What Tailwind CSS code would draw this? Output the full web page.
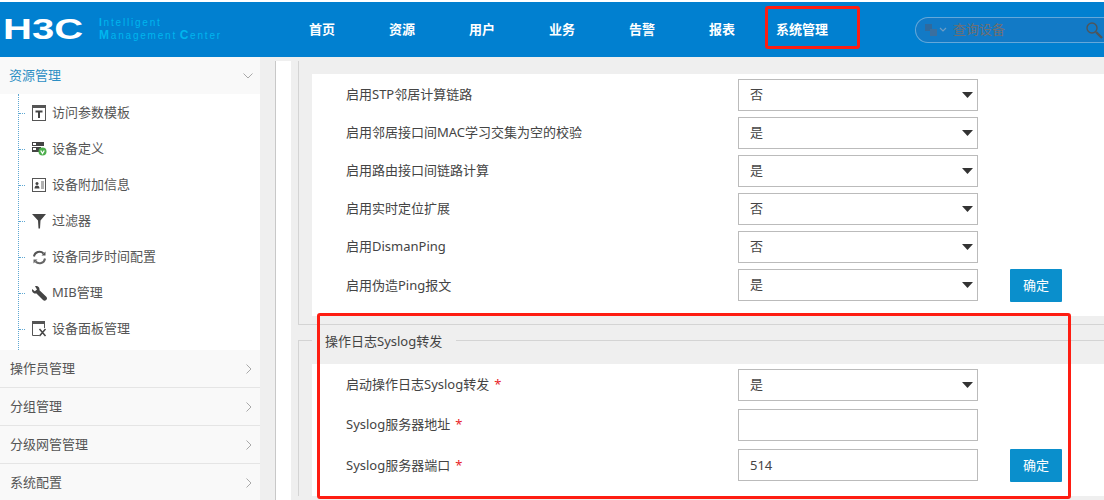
<!DOCTYPE html>
<html lang="zh">
<head>
<meta charset="utf-8">
<title>H3C Intelligent Management Center</title>
<script src="https://cdn.jsdelivr.net/npm/@tailwindcss/browser@4"></script>
</head>
<body class="m-0 bg-white">
<div class="relative flex h-[500px] w-[1104px] flex-col overflow-hidden bg-white pt-[2px] font-['Noto_Sans','Noto_Sans_CJK_SC',sans-serif] text-[13px] text-[#555]">

  <!-- header -->
  <header class="flex h-[55px] shrink-0 items-center bg-[#0180d0]">
    <div class="flex w-[282px] shrink-0 items-center pl-[3px]">
      <div class="w-[96px] shrink-0 overflow-visible">
        <span class="inline-block origin-left scale-x-[1.38] font-['Liberation_Sans',sans-serif] text-[29px] leading-none font-bold text-white">H3C</span>
      </div>
      <div class="font-['Liberation_Sans',sans-serif] text-[10px] leading-[12px] tracking-[1.8px] whitespace-nowrap text-[#00b6ee]">
        <div><b>I</b>ntelligent</div>
        <div class="[word-spacing:-2px]"><b class="text-[12px]">M</b>anagement <b class="text-[12px]">C</b>enter</div>
      </div>
    </div>
    <nav class="flex font-bold text-white">
      <a class="w-[80px] text-center">首页</a>
      <a class="w-[80px] text-center">资源</a>
      <a class="w-[80px] text-center">用户</a>
      <a class="w-[80px] text-center">业务</a>
      <a class="w-[80px] text-center">告警</a>
      <a class="w-[80px] text-center">报表</a>
      <a class="w-[80px] text-center whitespace-nowrap">系统管理</a>
    </nav>
    <div class="ml-[73px] flex h-[26px] w-[200px] shrink-0 items-center rounded-l-full border border-white/35 bg-[#127ac6] pl-[9px]">
      <svg width="12" height="12" viewBox="0 0 12 12" class="shrink-0"><rect x="0" y="0" width="7" height="7" fill="#2f6a9e"/><rect x="5" y="5" width="7" height="7" fill="#3a6f9f"/></svg>
      <svg width="8" height="6" viewBox="0 0 8 6" class="ml-[2px] shrink-0"><path d="M1 1l3 3 3-3" fill="none" stroke="#6d9cc4" stroke-width="1.2"/></svg>
      <input class="ml-[6px] w-[130px] bg-transparent text-[13px] outline-none placeholder:text-[#6f6f72]" placeholder="查询设备">
      <svg width="18" height="18" viewBox="0 0 18 18" class="ml-[2px] shrink-0"><circle cx="7" cy="7" r="5" fill="none" stroke="#505559" stroke-width="1.4"/><path d="M11 11l6 6" stroke="#505559" stroke-width="2.4"/></svg>
    </div>
  </header>

  <div class="flex min-h-0 flex-1">
    <!-- sidebar -->
    <aside class="w-[260px] shrink-0 bg-white">
      <div class="flex h-[37px] items-center justify-between bg-[#f9f9f9] pr-[7px] pl-[9px] text-[#2d8fc4]">
        <span>资源管理</span>
        <svg width="10" height="6" viewBox="0 0 10 6"><path d="M.5.5L5 5 9.500.5" fill="none" stroke="#a9a9a9" stroke-width="1"/></svg>
      </div>
      <ul class="ml-[18px] border-l border-dotted border-[#5fa8d3] pt-px pb-[3px]">
        <li class="flex h-[36px] items-center"><i class="mr-[7px] w-[6px] border-t border-dotted border-[#5fa8d3]"></i>
          <svg width="15" height="16" viewBox="0 0 15 16" class="mr-[5px] shrink-0"><rect x=".5" y=".5" width="13" height="15" fill="none" stroke="#555"/><rect x="0" y="0" width="14" height="3" fill="#555"/><path d="M3.500 5.500h7v2H8V13H6V7.500H3.500z" fill="#444"/></svg>
          <span>访问参数模板</span></li>
        <li class="flex h-[36px] items-center"><i class="mr-[7px] w-[6px] border-t border-dotted border-[#5fa8d3]"></i>
          <svg width="15" height="14" viewBox="0 0 15 14" class="mr-[5px] shrink-0"><rect x="0" y="0" width="12" height="4" fill="#444"/><rect x="0" y="5" width="9" height="5" fill="#444"/><rect x="1" y="1" width="3" height="2" fill="#fff"/><rect x="1" y="6" width="3" height="2" fill="#fff"/><circle cx="10.500" cy="9.500" r="4" fill="#4cae4c"/><path d="M8.700 8.500l1.800 3 1.800-3" fill="none" stroke="#fff" stroke-width="1.300"/></svg>
          <span>设备定义</span></li>
        <li class="flex h-[36px] items-center"><i class="mr-[7px] w-[6px] border-t border-dotted border-[#5fa8d3]"></i>
          <svg width="15" height="14" viewBox="0 0 15 14" class="mr-[5px] shrink-0"><rect x=".5" y=".5" width="13" height="13" fill="none" stroke="#555"/><circle cx="5" cy="5.500" r="1.500" fill="#444"/><path d="M2.500 10.500c0-2 1-3 2.500-3s2.500 1 2.500 3z" fill="#444"/><path d="M9 4h3M9 6h3M9 8h3M9 10h3" stroke="#666"/></svg>
          <span>设备附加信息</span></li>
        <li class="flex h-[36px] items-center"><i class="mr-[7px] w-[6px] border-t border-dotted border-[#5fa8d3]"></i>
          <svg width="15" height="16" viewBox="0 0 15 16" class="mr-[5px] shrink-0"><path d="M0 1h14L8.500 7.500 8 15.500H6.500L6 7.500z" fill="#444"/></svg>
          <span>过滤器</span></li>
        <li class="flex h-[36px] items-center"><i class="mr-[7px] w-[6px] border-t border-dotted border-[#5fa8d3]"></i>
          <svg width="15" height="15" viewBox="0 0 15 15" class="mr-[5px] shrink-0"><path d="M2 6.500A5.500 5.500 0 0 1 11.500 3.500" fill="none" stroke="#555" stroke-width="2"/><path d="M13 8.500A5.500 5.500 0 0 1 3.500 11.500" fill="none" stroke="#666" stroke-width="2"/><path d="M9.500 5.500h4v-4z" fill="#555"/><path d="M5.500 9.500h-4v4z" fill="#666"/></svg>
          <span>设备同步时间配置</span></li>
        <li class="flex h-[36px] items-center"><i class="mr-[7px] w-[6px] border-t border-dotted border-[#5fa8d3]"></i>
          <svg width="15" height="15" viewBox="0 0 15 15" class="mr-[5px] shrink-0"><path d="M0 3L2.800 5.200 5 3.500 3 .3C5.500-.7 7.800 1 7.500 4.200L14.300 10.800C15.300 11.900 15.200 13 14.200 14 13.200 15 12 15 11 14L4.500 7.400C1.800 8 -.6 5.700 0 3z" fill="#444"/></svg>
          <span>MIB管理</span></li>
        <li class="flex h-[36px] items-center"><i class="mr-[7px] w-[6px] border-t border-dotted border-[#5fa8d3]"></i>
          <svg width="15" height="16" viewBox="0 0 15 16" class="mr-[5px] shrink-0"><path d="M7 14.500H.5V.5h12V7" fill="none" stroke="#555"/><rect x="0" y="0" width="13" height="3" fill="#555"/><path d="M7.500 8l6 7M13.500 8l-6 7" stroke="#444" stroke-width="1.500"/></svg>
          <span>设备面板管理</span></li>
      </ul>
      <div class="flex h-[38px] items-center justify-between border-b border-[#e5e5e5] bg-[#f9f9f9] pr-[8px] pl-[10px]"><span>操作员管理</span><svg width="6" height="10" viewBox="0 0 6 10"><path d="M.5.500L5 5 .5 9.500" fill="none" stroke="#a9a9a9"/></svg></div>
      <div class="flex h-[38px] items-center justify-between border-b border-[#e5e5e5] bg-[#f9f9f9] pr-[8px] pl-[10px]"><span>分组管理</span><svg width="6" height="10" viewBox="0 0 6 10"><path d="M.5.500L5 5 .5 9.500" fill="none" stroke="#a9a9a9"/></svg></div>
      <div class="flex h-[38px] items-center justify-between border-b border-[#e5e5e5] bg-[#f9f9f9] pr-[8px] pl-[10px]"><span>分级网管管理</span><svg width="6" height="10" viewBox="0 0 6 10"><path d="M.5.500L5 5 .5 9.500" fill="none" stroke="#a9a9a9"/></svg></div>
      <div class="flex h-[38px] items-center justify-between border-b border-[#e5e5e5] bg-[#f9f9f9] pr-[8px] pl-[10px]"><span>系统配置</span><svg width="6" height="10" viewBox="0 0 6 10"><path d="M.5.500L5 5 .5 9.500" fill="none" stroke="#a9a9a9"/></svg></div>
    </aside>

    <!-- main -->
    <main class="flex min-w-0 flex-1 bg-[#efefef] pt-[4px] pl-[15px]">
      <div class="w-[16px] shrink-0 border-l border-[#c8c8c8] bg-white"></div>
      <div class="min-w-0 flex-1 pl-[7px]">

        <section class="h-[264px] border-b border-l border-[#d4d4d4] pt-[13px] pl-[13px]">
          <div class="flex h-[242px] flex-col gap-[6px] bg-white pt-[5px] pl-[34px] text-[#444]">
            <div class="flex h-[32px] items-center"><label class="w-[392px] shrink-0">启用STP邻居计算链路</label>
              <div class="relative w-[240px]"><select class="h-[32px] w-full appearance-none border border-[#bbb] bg-white pl-[11px] text-[13px] text-[#444]"><option>否</option></select><svg width="11" height="6" viewBox="0 0 11 6" class="pointer-events-none absolute top-[13px] right-[5px]"><path d="M0 0h11L5.500 6z" fill="#333"/></svg></div></div>
            <div class="flex h-[32px] items-center"><label class="w-[392px] shrink-0">启用邻居接口间MAC学习交集为空的校验</label>
              <div class="relative w-[240px]"><select class="h-[32px] w-full appearance-none border border-[#bbb] bg-white pl-[11px] text-[13px] text-[#444]"><option>是</option></select><svg width="11" height="6" viewBox="0 0 11 6" class="pointer-events-none absolute top-[13px] right-[5px]"><path d="M0 0h11L5.500 6z" fill="#333"/></svg></div></div>
            <div class="flex h-[32px] items-center"><label class="w-[392px] shrink-0">启用路由接口间链路计算</label>
              <div class="relative w-[240px]"><select class="h-[32px] w-full appearance-none border border-[#bbb] bg-white pl-[11px] text-[13px] text-[#444]"><option>是</option></select><svg width="11" height="6" viewBox="0 0 11 6" class="pointer-events-none absolute top-[13px] right-[5px]"><path d="M0 0h11L5.500 6z" fill="#333"/></svg></div></div>
            <div class="flex h-[32px] items-center"><label class="w-[392px] shrink-0">启用实时定位扩展</label>
              <div class="relative w-[240px]"><select class="h-[32px] w-full appearance-none border border-[#bbb] bg-white pl-[11px] text-[13px] text-[#444]"><option>否</option></select><svg width="11" height="6" viewBox="0 0 11 6" class="pointer-events-none absolute top-[13px] right-[5px]"><path d="M0 0h11L5.500 6z" fill="#333"/></svg></div></div>
            <div class="flex h-[32px] items-center"><label class="w-[392px] shrink-0">启用DismanPing</label>
              <div class="relative w-[240px]"><select class="h-[32px] w-full appearance-none border border-[#bbb] bg-white pl-[11px] text-[13px] text-[#444]"><option>否</option></select><svg width="11" height="6" viewBox="0 0 11 6" class="pointer-events-none absolute top-[13px] right-[5px]"><path d="M0 0h11L5.500 6z" fill="#333"/></svg></div></div>
            <div class="flex h-[32px] items-start"><label class="w-[392px] shrink-0 leading-[32px]">启用伪造Ping报文</label>
              <div class="relative w-[240px]"><select class="h-[32px] w-full appearance-none border border-[#bbb] bg-white pl-[11px] text-[13px] text-[#444]"><option>是</option></select><svg width="11" height="6" viewBox="0 0 11 6" class="pointer-events-none absolute top-[13px] right-[5px]"><path d="M0 0h11L5.500 6z" fill="#333"/></svg></div>
              <button class="ml-[32px] h-[33px] w-[52px] rounded-[1px] bg-[#0a8fcc] text-[13px] text-white">确定</button></div>
          </div>
        </section>

        <section class="mt-[15px] border-t border-l border-[#d4d4d4]">
          <div class="-mt-[11px] ml-[13px] h-[23px] w-[144px] bg-[#efefef] pl-[13px] leading-[22px] whitespace-nowrap text-[#444]">操作日志Syslog转发</div>
          <div class="mt-[11px] ml-[13px] flex h-[132px] flex-col gap-[8px] bg-white pt-[5px] pl-[34px] text-[#444]">
            <div class="flex h-[32px] items-center"><label class="w-[392px] shrink-0">启动操作日志Syslog转发<span class="ml-[5px] text-[#e8222a]">*</span></label>
              <div class="relative w-[240px]"><select class="h-[32px] w-full appearance-none border border-[#bbb] bg-white pl-[11px] text-[13px] text-[#444]"><option>是</option></select><svg width="11" height="6" viewBox="0 0 11 6" class="pointer-events-none absolute top-[13px] right-[5px]"><path d="M0 0h11L5.500 6z" fill="#333"/></svg></div></div>
            <div class="flex h-[32px] items-center"><label class="w-[392px] shrink-0">Syslog服务器地址<span class="ml-[5px] text-[#e8222a]">*</span></label>
              <input class="h-[32px] w-[240px] border border-[#bbb] bg-white pl-[11px] text-[13px]"></div>
            <div class="flex h-[32px] items-start"><label class="w-[392px] shrink-0 leading-[32px]">Syslog服务器端口<span class="ml-[5px] text-[#e8222a]">*</span></label>
              <input class="h-[32px] w-[240px] border border-[#bbb] bg-white pl-[11px] text-[13px] text-[#444]" value="514">
              <button class="ml-[32px] h-[33px] w-[52px] rounded-[1px] bg-[#0a8fcc] text-[13px] text-white">确定</button></div>
          </div>
        </section>
      </div>
    </main>
  </div>

  <!-- red annotation boxes drawn over the screenshot -->
  <div class="pointer-events-none absolute top-[6px] left-[765px] h-[43px] w-[95px] rounded-[3px] border-[3px] border-[#fe1d12]"></div>
  <div class="pointer-events-none absolute top-[313px] left-[317px] h-[186px] w-[754px] rounded-[3px] border-[3px] border-[#fe1d12]"></div>
</div>
</body>
</html>
